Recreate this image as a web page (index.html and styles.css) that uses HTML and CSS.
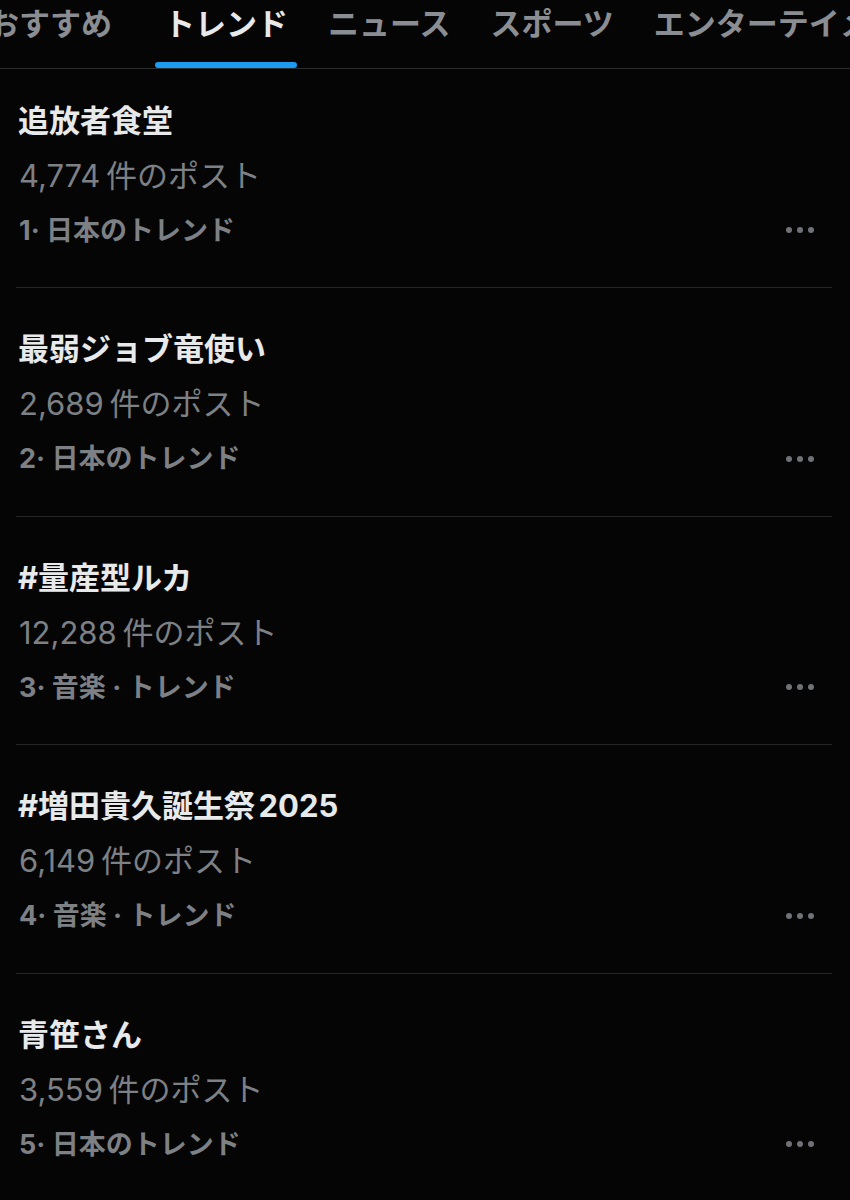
FILE: index.html
```html
<!DOCTYPE html>
<html lang="ja">
<head>
<meta charset="utf-8">
<link rel="stylesheet" href="styles.css">
</head>
<body>
<div class="app">
  <nav class="tabs">
    <div class="tab first">おすすめ</div>
    <div class="tab active">トレンド</div>
    <div class="tab">ニュース</div>
    <div class="tab">スポーツ</div>
    <div class="tab">エンターテイメント</div>
  </nav>
  <ul class="list">
    <li class="item">
      <div class="body">
        <div class="title">追放者食堂</div>
        <div class="count">4,774 件のポスト</div>
        <div class="meta">1· 日本のトレンド</div>
      </div>
      <div class="more"><span></span><span></span><span></span></div>
    </li>
    <li class="item">
      <div class="body">
        <div class="title">最弱ジョブ竜使い</div>
        <div class="count">2,689 件のポスト</div>
        <div class="meta">2· 日本のトレンド</div>
      </div>
      <div class="more"><span></span><span></span><span></span></div>
    </li>
    <li class="item">
      <div class="body">
        <div class="title">#量産型ルカ</div>
        <div class="count">12,288 件のポスト</div>
        <div class="meta">3· 音楽 · トレンド</div>
      </div>
      <div class="more"><span></span><span></span><span></span></div>
    </li>
    <li class="item">
      <div class="body">
        <div class="title">#増田貴久誕生祭 2025</div>
        <div class="count">6,149 件のポスト</div>
        <div class="meta">4· 音楽 · トレンド</div>
      </div>
      <div class="more"><span></span><span></span><span></span></div>
    </li>
    <li class="item">
      <div class="body">
        <div class="title">青笹さん</div>
        <div class="count">3,559 件のポスト</div>
        <div class="meta">5· 日本のトレンド</div>
      </div>
      <div class="more"><span></span><span></span><span></span></div>
    </li>
  </ul>
</div>
</body>
</html>
```

FILE: styles.css
```css
html, body {
  margin: 0;
  padding: 0;
  background: #050505;
}
body {
  width: 850px;
  height: 1200px;
  overflow: hidden;
  font-family: Inter, "Noto Sans CJK JP", "Noto Sans", sans-serif;
  color: #e7e9ea;
}
.app {
  width: 850px;
  overflow: hidden;
}
.tabs {
  display: flex;
  height: 68px;
  border-bottom: 1px solid #2a2c2e;
  margin-left: -21px;
  gap: 22px;
  white-space: nowrap;
}
.tab {
  position: relative;
  flex: none;
  padding: 0 9px;
  font-size: 31px;
  font-weight: 700;
  line-height: 48px;
  color: #8a8d91;
}
.tab.first {
  margin-right: 12px;
}
.tab.active {
  color: #e7e9ea;
}
.tab.active::after {
  content: "";
  position: absolute;
  left: 0;
  right: 0;
  bottom: 0;
  height: 6px;
  border-radius: 3px;
  background: #1d9bf0;
}
.list {
  list-style: none;
  margin: 0;
  padding: 0 18px 0 16px;
}
.item {
  display: flex;
  align-items: flex-end;
  padding: 33px 0 29.5px 2px;
  border-bottom: 1px solid #242628;
}
.item:first-child {
  padding-top: 23.5px;
}
.body {
  flex: 1;
}
.title {
  font-size: 31px;
  font-weight: 700;
  line-height: 55px;
  color: #e7e9ea;
  word-spacing: -4px;
}
.count {
  font-size: 31px;
  font-weight: 400;
  line-height: 55px;
  color: #7d8084;
  padding-left: 1px;
  word-spacing: -3px;
}
.meta {
  font-size: 27px;
  font-weight: 700;
  line-height: 55px;
  color: #7d8084;
  padding-left: 1px;
}
.more {
  display: flex;
  gap: 5px;
  height: 55px;
  align-items: center;
  padding-right: 18px;
}
.more span {
  width: 6px;
  height: 6px;
  border-radius: 50%;
  background: #6f7276;
}
```
